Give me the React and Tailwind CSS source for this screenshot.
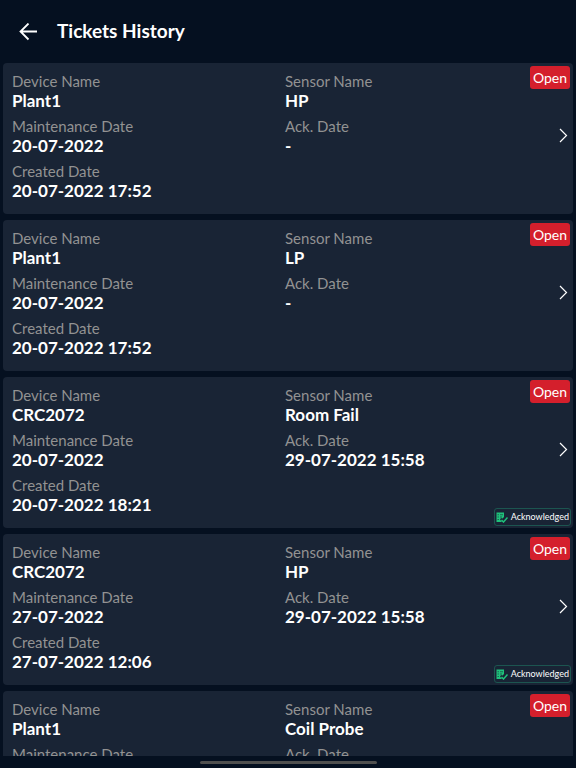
const tickets = [
  {
    id: 1,
    device: "Plant1",
    sensor: "HP",
    maintenance: "20-07-2022",
    ack: null,
    created: "20-07-2022 17:52",
  },
  {
    id: 2,
    device: "Plant1",
    sensor: "LP",
    maintenance: "20-07-2022",
    ack: null,
    created: "20-07-2022 17:52",
  },
  {
    id: 3,
    device: "CRC2072",
    sensor: "Room Fail",
    maintenance: "20-07-2022",
    ack: "29-07-2022 15:58",
    created: "20-07-2022 18:21",
  },
  {
    id: 4,
    device: "CRC2072",
    sensor: "HP",
    maintenance: "27-07-2022",
    ack: "29-07-2022 15:58",
    created: "27-07-2022 12:06",
  },
  {
    id: 5,
    device: "Plant1",
    sensor: "Coil Probe",
    maintenance: "27-07-2022",
    ack: null,
    created: "27-07-2022 12:06",
  },
];

function Field({ label, value }) {
  return (
    <div>
      <dt className="text-[15px] leading-5 text-[#929292]">{label}</dt>
      <dd className="text-[17px] leading-5 font-bold text-white">{value}</dd>
    </div>
  );
}

function AckIcon() {
  return (
    <svg viewBox="0 0 24 22" className="w-3 h-[11px]" aria-hidden="true">
      <path d="M1 1h15v9l-3 3-3-1-2 3 4 5H1z" fill="#1fc27b" />
      <path
        d="M3 5.5h3M8 5.5h6M3 10h3M8 10h4M3 15h3"
        stroke="#192435"
        strokeWidth="1.2"
      />
      <path
        d="M11 16l4 4 8-9"
        fill="none"
        stroke="#1fc27b"
        strokeWidth="3"
      />
    </svg>
  );
}

function TicketCard({ ticket }) {
  return (
    <li className="relative shrink-0 rounded bg-[#192435] pl-[9px] pt-2 pb-[13px]">
      <dl className="grid grid-cols-2 gap-y-[5px] pr-[15px]">
        <Field label="Device Name" value={ticket.device} />
        <Field label="Sensor Name" value={ticket.sensor} />
        <Field label="Maintenance Date" value={ticket.maintenance} />
        <Field label="Ack. Date" value={ticket.ack || "-"} />
        <Field label="Created Date" value={ticket.created} />
      </dl>

      <span className="absolute top-[3px] right-[3px] rounded-[3px] bg-[#d41f2c] px-[3px] text-[14px] leading-[23px] text-white">
        Open
      </span>

      <button
        type="button"
        aria-label="View ticket"
        className="absolute right-[5px] top-16 cursor-pointer"
      >
        <svg viewBox="0 0 10 16" className="w-[10px] h-4" aria-hidden="true">
          <path
            d="M2 2l6.5 6.500L2 15"
            fill="none"
            stroke="#fff"
            strokeWidth="1.2"
          />
        </svg>
      </button>

      {ticket.ack && (
        <span className="absolute right-[2px] bottom-[2px] flex h-[18px] items-center gap-[3px] rounded-[3px] border border-[#1c5550] px-[1px] text-[9px] text-white">
          <AckIcon />
          Acknowledged
        </span>
      )}
    </li>
  );
}

function App() {
  return (
    <div className="flex h-screen flex-col bg-[#051020] font-['Lato',sans-serif]">
      <header className="flex h-[63px] shrink-0 items-center gap-[19px] pl-[19px]">
        <button type="button" aria-label="Back" className="cursor-pointer">
          <svg viewBox="0 0 19 18" className="w-[19px] h-[18px]" aria-hidden="true">
            <path
              d="M18 8.500H1.500M9.500 0.500l-8 8 8 8"
              fill="none"
              stroke="#fff"
              strokeWidth="1.800"
            />
          </svg>
        </button>
        <h1 className="text-[19px] font-bold text-white">Tickets History</h1>
      </header>

      {/* Ticket list */}
      <ul className="flex min-h-0 flex-1 flex-col gap-[6px] overflow-y-auto px-[3px] [scrollbar-width:none]">
        {tickets.map((ticket) => (
          <TicketCard key={ticket.id} ticket={ticket} />
        ))}
      </ul>

      {/* Home indicator */}
      <div className="flex h-3 shrink-0 items-center justify-center">
        <div className="h-[3px] w-[177px] rounded-full bg-[#50504f]" />
      </div>
    </div>
  );
}

export default App;
